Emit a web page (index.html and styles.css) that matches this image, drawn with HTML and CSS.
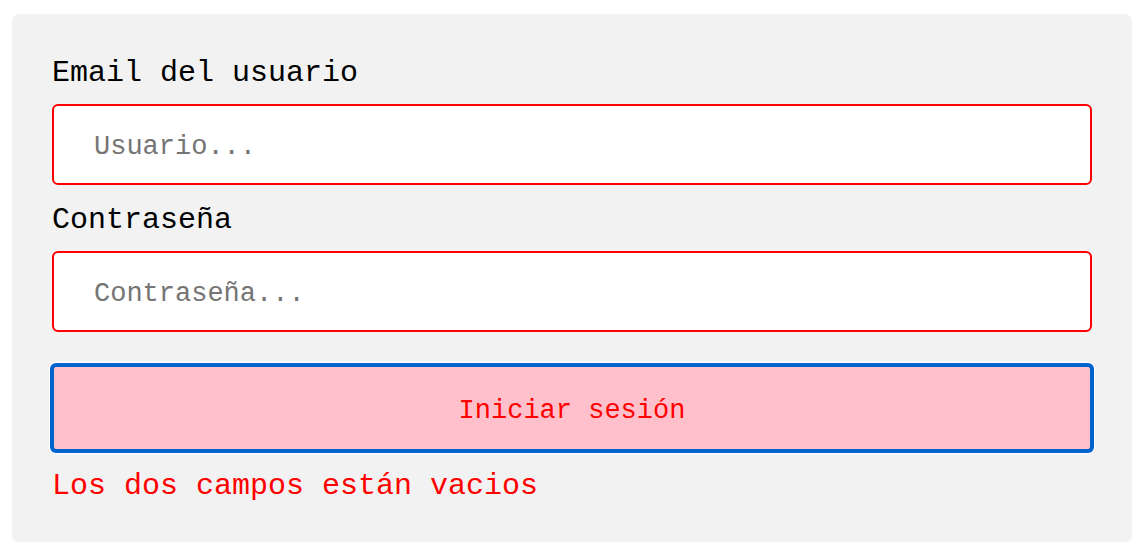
FILE: index.html
```html
<!DOCTYPE html>
<html lang="es">
<head>
<meta charset="utf-8">
<title>Login</title>
<link rel="stylesheet" href="styles.css">
</head>
<body>
  <form class="login-box">
    <label class="field-label" for="email">Email del usuario</label>
    <input class="field-input" id="email" type="text" placeholder="Usuario...">
    <label class="field-label" for="pass">Contraseña</label>
    <input class="field-input field-input-last" id="pass" type="password" placeholder="Contraseña...">
    <button class="submit-btn" type="button">Iniciar sesión</button>
    <p class="error-msg">Los dos campos están vacios</p>
  </form>
</body>
</html>
```

FILE: styles.css
```css
html, body {
  margin: 0;
  padding: 0;
  background: #ffffff;
}

body {
  padding: 14px 12px 10px 12px;
  font-family: "Liberation Mono", "Courier New", monospace;
}

.login-box {
  display: flex;
  flex-direction: column;
  background: #f2f2f2;
  border-radius: 7px;
  padding: 42px 40px 38px 40px;
  box-sizing: border-box;
  height: 528px;
}

.field-label {
  display: block;
  font-size: 30px;
  line-height: 34px;
  color: #000000;
  margin-bottom: 14px;
}

.field-input {
  display: block;
  box-sizing: border-box;
  width: 100%;
  height: 81px;
  margin: 0 0 18px 0;
  padding: 4px 40px 0 40px;
  border: 2px solid #ff0000;
  border-radius: 6px;
  background: #ffffff;
  font-family: "Liberation Mono", "Courier New", monospace;
  font-size: 27px;
  color: #000000;
  outline: none;
}

.field-input::placeholder {
  color: #757575;
  opacity: 1;
}

.field-input-last {
  margin-bottom: 33px;
}

.submit-btn {
  display: block;
  box-sizing: border-box;
  width: 100%;
  height: 86px;
  margin: 0;
  padding: 5px 0 0 0;
  border: 2px solid #0064cf;
  border-radius: 4px;
  box-shadow: 0 0 0 2px #0064cf, 0 0 0 3px #ffffff;
  background: #ffc0cb;
  color: #ff0000;
  font-family: "Liberation Mono", "Courier New", monospace;
  font-size: 27px;
  cursor: pointer;
}

.error-msg {
  margin: 18px 0 0 0;
  font-size: 30px;
  line-height: 34px;
  color: #ff0000;
}
```
